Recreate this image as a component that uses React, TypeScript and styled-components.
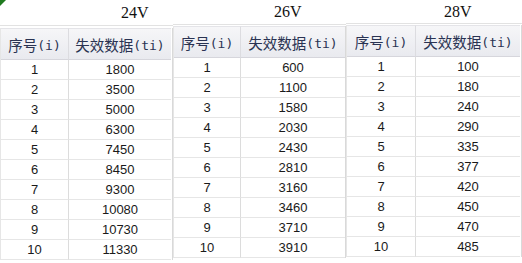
import React from "react";
import styled, { createGlobalStyle } from "styled-components";

const Global = createGlobalStyle`
  html, body { margin: 0; padding: 0; background: #ffffff; }
  #root { width: 522px; height: 263px; overflow: hidden; }
`;

const Page = styled.div`
  display: flex;
  align-items: flex-start;
  width: 522px;
  height: 263px;
  background: #ffffff;
  overflow: hidden;
`;

const Panel = styled.div<{ $w: number }>`
  width: ${(p) => p.$w}px;
  flex: none;
  display: flex;
  flex-direction: column;
`;

const TitleCell = styled.div<{ $h: number; $pad: number; $gap: number }>`
  position: relative;
  height: ${(p) => p.$h}px;
  margin-bottom: ${(p) => p.$gap}px;
  padding-left: ${(p) => p.$pad}px;
  box-sizing: border-box;
  border-bottom: 1px solid #e2e2e2;
  display: flex;
  align-items: center;
  font-family: "Liberation Serif", serif;
  font-size: 16px;
  color: #111;
`;

const Corner = styled.div`
  position: absolute;
  left: 0;
  top: 0;
  width: 0;
  height: 0;
  border-top: 6px solid #1f7a1f;
  border-right: 6px solid transparent;
`;

const Table = styled.div<{ $c1: number; $c2: number }>`
  display: grid;
  grid-template-columns: ${(p) => p.$c1}px ${(p) => p.$c2}px;
  border-right: 1px solid #d9d9d9;
  border-left: 1px solid #e6e6e6;
`;

const Head = styled.div<{ $last?: boolean }>`
  height: 32px;
  box-sizing: border-box;
  display: flex;
  align-items: center;
  justify-content: center;
  background: linear-gradient(#f6f6f8, #e9eaef);
  border-top: 1px solid #e4e4e8;
  border-bottom: 1px solid #d6d6dc;
  border-right: ${(p) => (p.$last ? "none" : "1px solid #dcdce0")};
  font-family: "Noto Sans CJK SC", sans-serif;
  font-size: 14.5px;
  color: #2a3352;
  white-space: nowrap;
`;

const Half = styled.span`
  font-family: "DejaVu Sans Mono", monospace;
  font-size: 13px;
  color: #2a3352;
  position: relative;
  top: 1px;
`;

const Cell = styled.div<{ $last?: boolean }>`
  height: 20px;
  box-sizing: border-box;
  display: flex;
  align-items: center;
  justify-content: center;
  border-bottom: 1px solid #e6e6e6;
  border-right: ${(p) => (p.$last ? "none" : "1px solid #dcdcdc")};
  font-family: "Liberation Sans", sans-serif;
  font-size: 13px;
  color: #1a1a1a;
`;

type Cfg = {
  label: string;
  w: number;
  c1: number;
  c2: number;
  titleH: number;
  gap: number;
  pad: number;
  data: number[];
  corner?: boolean;
};

const tables: Cfg[] = [
  {
    label: "24V",
    w: 173,
    c1: 68,
    c2: 102,
    titleH: 26,
    gap: 2,
    pad: 121,
    corner: true,
    data: [1800, 3500, 5000, 6300, 7450, 8450, 9300, 10080, 10730, 11330],
  },
  {
    label: "26V",
    w: 173,
    c1: 67,
    c2: 104,
    titleH: 25,
    gap: 1,
    pad: 101,
    data: [600, 1100, 1580, 2030, 2430, 2810, 3160, 3460, 3710, 3910],
  },
  {
    label: "28V",
    w: 176,
    c1: 69,
    c2: 104,
    titleH: 24,
    gap: 1,
    pad: 98,
    data: [100, 180, 240, 290, 335, 377, 420, 450, 470, 485],
  },
];

export default function App() {
  return (
    <>
      <Global />
      <Page>
        {tables.map((t) => (
          <Panel key={t.label} $w={t.w}>
            <TitleCell $h={t.titleH} $pad={t.pad} $gap={t.gap}>
              {t.corner && <Corner />}
              {t.label}
            </TitleCell>
            <Table $c1={t.c1} $c2={t.c2}>
              <Head>
                序号<Half>(i)</Half>
              </Head>
              <Head $last>
                失效数据<Half>(ti)</Half>
              </Head>
              {t.data.map((v, i) => (
                <React.Fragment key={i}>
                  <Cell>{i + 1}</Cell>
                  <Cell $last>{v}</Cell>
                </React.Fragment>
              ))}
            </Table>
          </Panel>
        ))}
      </Page>
    </>
  );
}
